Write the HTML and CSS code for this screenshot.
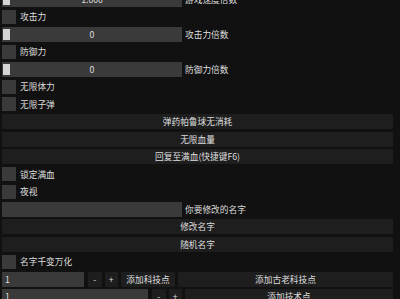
FILE: index.html
```html
<!DOCTYPE html>
<html lang="zh-CN">
<head>
    <meta charset="UTF-8">
    <title>修改器</title>
    <link rel="stylesheet" href="styles.css">
</head>
<body>
    <div class="panel">
        <div class="row">
            <div class="frame slider"><span class="grab"></span>1.000</div>
            <span class="label">游戏速度倍数</span>
        </div>
        <div class="row"><span class="check"></span><span class="label">攻击力</span></div>
        <div class="row">
            <div class="frame slider"><span class="grab"></span>0</div>
            <span class="label">攻击力倍数</span>
        </div>
        <div class="row"><span class="check"></span><span class="label">防御力</span></div>
        <div class="row">
            <div class="frame slider"><span class="grab"></span>0</div>
            <span class="label">防御力倍数</span>
        </div>
        <div class="row"><span class="check"></span><span class="label">无限体力</span></div>
        <div class="row"><span class="check"></span><span class="label">无限子弹</span></div>
        <div class="row"><button class="btn wide">弹药帕鲁球无消耗</button></div>
        <div class="row"><button class="btn wide">无限血量</button></div>
        <div class="row"><button class="btn wide">回复至满血(快捷键F6)</button></div>
        <div class="row"><span class="check"></span><span class="label">锁定满血</span></div>
        <div class="row"><span class="check"></span><span class="label">夜视</span></div>
        <div class="row">
            <div class="frame input"></div>
            <span class="label">你要修改的名字</span>
        </div>
        <div class="row"><button class="btn wide">修改名字</button></div>
        <div class="row"><button class="btn wide">随机名字</button></div>
        <div class="row"><span class="check"></span><span class="label">名字千变万化</span></div>
        <div class="row tools">
            <div class="frame input short">1</div>
            <button class="btn step">-</button>
            <button class="btn step">+</button>
            <button class="btn add">添加科技点</button>
            <button class="btn wide">添加古老科技点</button>
        </div>
        <div class="row tools">
            <div class="frame input medium">1</div>
            <button class="btn step">-</button>
            <button class="btn step">+</button>
            <button class="btn wide">添加技术点</button>
        </div>
    </div>
</body>
</html>
```

FILE: styles.css
```css
:root {
    --bg: #111111;
    --frame: #3a3a3a;
    --button: #1e1e1e;
    --grab: #d4d4d4;
    --text: #dedede;
}

* {
    margin: 0;
    padding: 0;
    box-sizing: border-box;
}

body {
    background: var(--bg);
    color: var(--text);
    font-family: "Noto Sans CJK SC", "Noto Sans", sans-serif;
    font-size: 8.7px;
    overflow: hidden;
}

.panel {
    display: flex;
    flex-direction: column;
    gap: 2.5px;
    margin-top: -8.5px;
    padding: 0 7px 0 2px;
}

.row {
    display: flex;
    align-items: center;
    gap: 4px;
    height: 15px;
}

.frame {
    background: var(--frame);
    height: 15px;
    display: flex;
    align-items: center;
}

.slider {
    position: relative;
    width: 180px;
    justify-content: center;
    margin-right: -1px;
}

.grab {
    position: absolute;
    left: 1px;
    top: 2px;
    width: 7px;
    height: 11px;
    background: var(--grab);
}

.input {
    width: 180px;
    padding-left: 3px;
    margin-right: -1px;
}

.input.short {
    width: 82px;
    margin-right: 0;
}

.input.medium {
    width: 146px;
    margin-right: 0;
}

.check {
    width: 14px;
    height: 14px;
    background: var(--frame);
}

.label {
    white-space: nowrap;
}

.btn {
    background: var(--button);
    color: var(--text);
    border: none;
    border-radius: 1px;
    font: inherit;
    height: 15px;
    white-space: nowrap;
}

.wide {
    flex: 1;
}

.tools .step {
    width: 13.5px;
    margin-right: -1px;
}

.tools .add {
    width: 54px;
    margin-right: -1px;
}
```
